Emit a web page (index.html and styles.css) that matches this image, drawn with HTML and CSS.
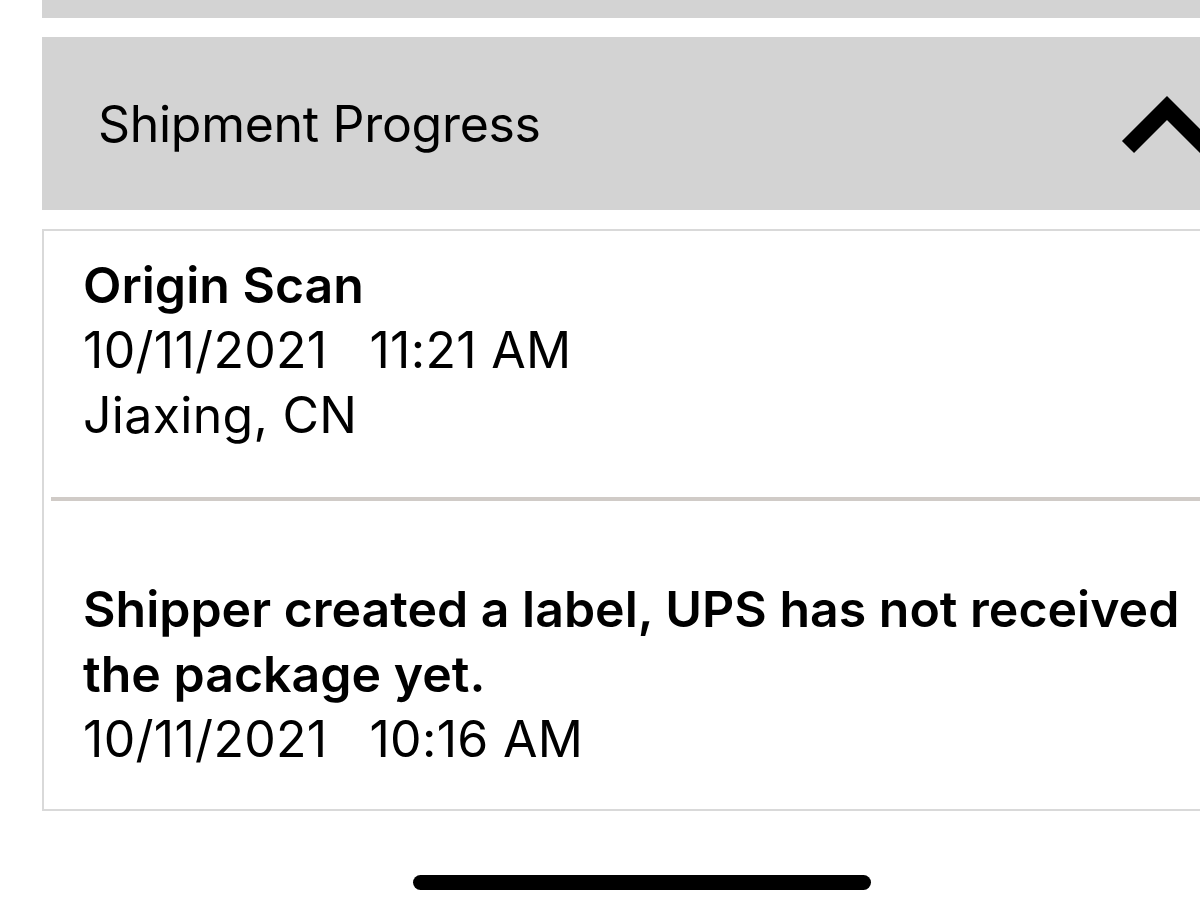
FILE: index.html
```html
<!DOCTYPE html>
<html lang="en">
<head>
  <meta charset="UTF-8" />
  <meta name="viewport" content="width=device-width, initial-scale=1.0" />
  <title>Shipment Progress</title>
  <link rel="stylesheet" href="styles.css">
</head>
<body>
  <div class="page">
    <div class="section-bar"></div>

    <div class="section-header">
      <span class="section-title">Shipment Progress</span>
      <svg class="chevron" width="100" height="70" viewBox="0 0 100 70">
        <polyline points="11,62 50,23 89,62" fill="none" stroke="#000" stroke-width="17" stroke-linejoin="miter" stroke-linecap="butt" />
      </svg>
    </div>

    <div class="progress-card">
      <div class="progress-item">
        <div class="status">Origin Scan</div>
        <div class="when"><span>10/11/2021</span><span>11:21 AM</span></div>
        <div class="where">Jiaxing, CN</div>
      </div>
      <div class="progress-item spaced">
        <div class="status">Shipper created a label, UPS has not received the package yet.</div>
        <div class="when"><span>10/11/2021</span><span>10:16 AM</span></div>
      </div>
    </div>
  </div>

  <div class="home-indicator"></div>
</body>
</html>
```

FILE: styles.css
```css
html, body { margin: 0; padding: 0; background: #fff; overflow: hidden; }
body { font-family: Inter, "Noto Sans", sans-serif; color: #000; width: 1200px; height: 914px; position: relative; }
.page { margin-left: 42px; width: 1200px; }
.section-bar { height: 18px; background: #d3d3d3; }
.section-header { margin-top: 19px; height: 173px; background: #d3d3d3; display: flex; align-items: center; justify-content: space-between; padding: 0 25px 0 56px; box-sizing: border-box; }
.section-title { font-size: 50px; font-weight: 400; letter-spacing: -0.3px; }
.chevron { display: block; margin-top: -7px; }
.progress-card { margin-top: 19px; border: 2px solid #d9d9d9; }
.progress-item { margin-left: 7px; padding: 22px 20px 49px 32px; font-size: 50px; line-height: 65px; letter-spacing: 0.3px; }
.progress-item + .progress-item { border-top: 4px solid #d0cbc7; }
.progress-item.spaced { padding-top: 76px; padding-bottom: 37px; }
.status { font-weight: 600; font-size: 50px; letter-spacing: 0; }
.when span + span { margin-left: 42px; }
.home-indicator { position: absolute; left: 413px; top: 875px; width: 458px; height: 15px; border-radius: 8px; background: #000; }
```
